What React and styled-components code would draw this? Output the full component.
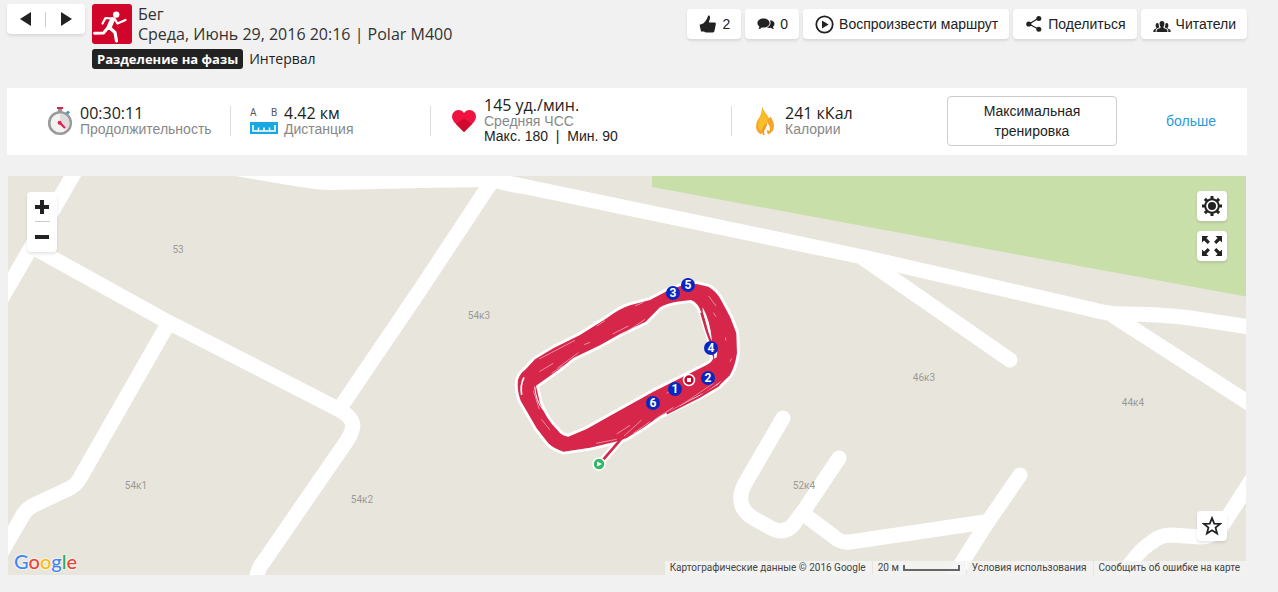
import styled, { createGlobalStyle } from "styled-components";

const GlobalStyle = createGlobalStyle`
    *{
        box-sizing: border-box;
    }
    body{
        margin:0;
        background-color: #f1f1f1;
        color:#222;
        font-family: "Liberation Sans", Arial, sans-serif;
        font-size:14px;
    }
    button{
        font-family: inherit;
        color:inherit;
        cursor: pointer;
    }
    h1, p, dl, dd{
        margin:0;
        font-weight: normal;
    }
    a{
        text-decoration: none;
    }
`;
const Page = styled.div`
    display: flex;
    flex-direction: column;
    min-height:100vh;
    padding:4px 31px 17px 7px;
`;
const Header = styled.header`
    display: flex;
    align-items: flex-start;
    height:84px;
`;
const Panel = styled.div`
    display: flex;
    align-items: center;
    background-color: white;
    border-radius: 4px;
    box-shadow: 0 2px 3px rgba(0,0,0,0.1);
`;
const Pager = styled(Panel)`
    height:30px;
    margin-right:7px;
`;
const PagerButton = styled.button`
    display: flex;
    align-items: center;
    justify-content: center;
    width:38px;
    height:30px;
    padding:0;
    border:none;
    background: none;
`;
const PagerLine = styled.span`
    width:2px;
    height:15px;
    border-left:1px solid #ccc;
`;
const SportIcon = styled.svg`
    width:40px;
    height:40px;
    border-radius: 3px;
    background-color: #d10429;
`;
const Session = styled.div`
    font-family: "Open Sans", "Noto Sans", sans-serif;
`;
const SessionTop = styled.div`
    display: flex;
    gap:6px;
`;
const Title = styled.h1`
    font-size:16px;
    line-height:20px;
    color:#333;
`;
const Tags = styled.div`
    display: flex;
    align-items: center;
    gap:6px;
    margin-top:5px;
    font-size:14px;
    line-height:20px;
`;
const PhaseTag = styled.span`
    padding:0 5px;
    border-radius: 3px;
    background-color: #222;
    color:white;
    font-size:13px;
    font-weight: bold;
`;
const Actions = styled.div`
    display: flex;
    gap:4px;
    margin-left:auto;
    margin-top:5px;
`;
const Action = styled(Panel).attrs({ as: "button", type: "button" })`
    height:30px;
    gap:5px;
    padding:0 11px 0 12px;
    border:none;
    font-size:14px;
    svg{
        display: block;
    }
`;
const Summary = styled.section`
    display: grid;
    grid-template-columns: 224fr 200fr 301fr 215fr 170fr 130fr;
    align-items: center;
    min-height:67px;
    margin-bottom:21px;
    padding-bottom:2px;
    background-color: white;
`;
const Stat = styled.div`
    display: flex;
    align-items: center;
    padding-left:${(props) => (props.$first ? "37px" : "17px")};
    &::after{
        content:"";
        width:${(props) => (props.$last ? "0" : "1px")};
        height:30px;
        margin-left:auto;
        background-color: #ddd;
    }
`;
const StatIcon = styled.span`
    display: flex;
    justify-content: center;
    width:32px;
    margin-right:4px;
`;
const StatText = styled.dl`
    display: flex;
    flex-direction: column-reverse;
    white-space: nowrap;
    dt{
        line-height:16px;
        color:#888;
    }
    dd{
        font-family: "Open Sans", "Noto Sans", sans-serif;
        font-size:16px;
        line-height:16px;
    }
`;
const Range = styled.p`
    line-height:15px;
    white-space: pre;
`;
const Benefit = styled.button`
    min-height:50px;
    padding:0 20px;
    border:1px solid #ccc;
    border-radius: 4px;
    background-color: white;
    font-size:14px;
    line-height:20px;
`;
const More = styled.a`
    justify-self: end;
    margin-right:31px;
    color:#2a9bd6;
`;
const Map = styled.main`
    position: relative;
    flex:1;
    min-height:300px;
    margin:0 1px;
    overflow: hidden;
    background-color: #e8e6dc;
`;
const MapCanvas = styled.svg`
    position: absolute;
    width:100%;
    height:100%;
    font-family: Roboto, sans-serif;
`;
const ZoomBox = styled(Panel)`
    position: absolute;
    top:16px;
    left:19px;
    flex-direction: column;
`;
const ZoomButton = styled(PagerButton)`
    width:30px;
`;
const ZoomLine = styled.span`
    width:15px;
    margin-top:-1px;
    border-top:1px solid #ccc;
`;
const MapTools = styled.div`
    position: absolute;
    top:15px;
    right:19px;
    bottom:34px;
    display: flex;
    flex-direction: column;
    gap:10px;
`;
const MapTool = styled(Panel).attrs({ as: "button", type: "button" })`
    justify-content: center;
    width:30px;
    height:30px;
    padding:0;
    border:none;
    &:last-child{
        margin-top:auto;
    }
`;
const Google = styled.a`
    position: absolute;
    left:6px;
    bottom:1px;
    font-family: Lato, sans-serif;
    font-size:20px;
    line-height:26px;
    font-weight: 500;
    color:#4285f4;
    text-shadow: 0 0 2px white, 0 0 2px white;
`;
const Letter = styled.span`
    color:${(props) => props.$color};
`;
const Credits = styled.footer`
    position: absolute;
    right:0;
    bottom:0;
    display: flex;
    gap:1px;
    font-family: Roboto, sans-serif;
    font-size:10px;
    line-height:14px;
    color:#444;
`;
const Credit = styled.span`
    display: flex;
    align-items: center;
    gap:4px;
    padding:0 6px 0 5px;
    background-color: rgba(243,243,243,0.85);
    a{
        color:inherit;
    }
`;
const ScaleBar = styled.span`
    width:57px;
    height:6px;
    border:2px solid #666;
    border-top:none;
`;

const roads = [
    "M76 170L-4 308",
    "M36 249L168 322L338 409Q356 419 352 430Q350 437 344 445L262 564Q258 569 256 580",
    "M168 324L80 478Q76 486 66 490L36 504Q27 508 23 515L-2 558",
    "M342 405L420 290L490 184",
    "M498 181L863 257L1090 309Q1108 314 1120 314Q1160 314 1190 318L1250 327",
    "M1112 315L1258 409",
    "M1120 580Q1136 552 1152 542Q1160 535 1172 535L1200 537Q1214 537 1222 526L1258 470",
];
const deadEnds = [
    "M863 258L1010 360",
    "M783 418L747 480Q738 494 742 506Q745 513 753 518L771 528Q784 535 793 525L805 509L839 458",
    "M805 515L833 536Q840 543 850 542L985 522",
    "M1020 475L985 526L949 583",
];
const houses = [
    { x: 178, y: 253, name: "53" },
    { x: 479, y: 319, name: "54к3" },
    { x: 136, y: 489, name: "54к1" },
    { x: 362, y: 503, name: "54к2" },
    { x: 924, y: 381, name: "46к3" },
    { x: 1133, y: 406, name: "44к4" },
    { x: 804, y: 489, name: "52к4" },
];
const laps = [
    { x: 675, y: 389, lap: 1 },
    { x: 708, y: 378, lap: 2 },
    { x: 673, y: 293, lap: 3 },
    { x: 711, y: 348, lap: 4 },
    { x: 688, y: 285, lap: 5 },
    { x: 653, y: 403, lap: 6 },
];
const track =
    "M590 42L625 50Q650 64 663 90L690 140Q700 165 709 190L711 250Q705 290 690 315L655 350L600 380L480 438L430 473L380 504L355 513L270 533L190 545Q160 535 145 520L110 475L62 392Q50 360 54 330Q60 310 75 300L105 268L160 235L240 195L320 145Q360 115 390 106L450 90L500 64L550 45Z" +
    "M573 90L530 95Q500 100 480 112L437 155L360 192L300 226L220 264L175 300L108 347L120 400Q140 450 172 480Q185 498 205 500L260 477L340 432L460 365L560 315L620 285Q636 277 640 264L632 240L632 215L620 180L605 130Q595 98 573 90Z";
const streaks =
    "M118 267L225 211M118 305L160 280M155 310L188 288M172 295L235 248M252 224L270 217M290 168L315 152M338 192L385 168M365 195L435 148M405 108L430 97M100 362L118 418M124 448L150 480M288 520L350 508M350 492L390 466M372 498L425 450M400 490L450 455M462 450L520 412M540 408L640 340M626 78L648 108M640 128L648 140M676 202L678 212M690 275L695 265M500 370L520 358";

function MyMap() {
    return (
        <MapCanvas viewBox="8 176 1238 399" preserveAspectRatio="xMidYMid slice" role="img" aria-label="Карта">
            <path d="M652 170V187L1090 268L1260 299V170Z" fill="#c9dfaa" />
            <g fill="none" stroke="white" strokeWidth="15" strokeLinejoin="round">
                <path d="M212 172L300 187Q320 190 330 190L420 188L490 187L520 194L500 172Z" fill="white" stroke="none" />
                {roads.map((d) => <path key={d} d={d} />)}
                {deadEnds.map((d) => <path key={d} d={d} strokeLinecap="round" />)}
            </g>
            <g fill="#999" fontSize="10" textAnchor="middle">
                {houses.map((h) => <text key={h.name} x={h.x} y={h.y}>{h.name}</text>)}
            </g>
            <g transform="translate(500 270) scale(0.3333)" fill="none" strokeLinejoin="round">
                <path d="M300 580L362 508" stroke="white" strokeWidth="22" />
                <path d={track} fillRule="evenodd" fill="#d6274b" stroke="white" strokeWidth="17" />
                <path d={track} fillRule="evenodd" fill="#d6274b" />
                <path d="M300 580L365 505" stroke="#d6274b" strokeWidth="8" />
                <path d="M608 112Q630 150 636 212L628 205Q622 170 608 125ZM642 250L652 245L650 262L643 266Z" fill="white" />
                <path d="M604 128L620 182L632 215" stroke="#d6274b" strokeWidth="7" />
                <path d="M484 436L590 385L640 350L685 318L664 345L600 374Z" fill="white" />
                <path d="M500 431L600 380L655 346L688 312" stroke="#d6274b" strokeWidth="6" />
                <path d="M104 350Q108 395 130 420" stroke="white" strokeWidth="3" />
                <path d={streaks} stroke="#f3bcc5" strokeWidth="2" />
                <path d="M65 375Q60 345 72 322" stroke="white" strokeWidth="5" />
            </g>
            <circle cx="599" cy="464" r="6" fill="#35b768" stroke="white" strokeWidth="1.5" />
            <path d="M597 461.5L602 464L597 466.5Z" fill="white" />
            <circle cx="689" cy="380" r="5.5" fill="#c5062f" stroke="white" strokeWidth="1.5" />
            <rect x="687" y="378" width="4" height="4" fill="white" />
            {laps.map((l) => (
                <g key={l.lap}>
                    <circle cx={l.x} cy={l.y} r="7" fill="#0726c4" />
                    <text x={l.x} y={l.y + 4} fill="white" fontSize="12" fontWeight="bold" textAnchor="middle">{l.lap}</text>
                </g>
            ))}
        </MapCanvas>
    );
}

function App() {
    return (
        <Page>
            <GlobalStyle />
            <Header>
                <Pager>
                    <PagerButton type="button" aria-label="Назад">
                        <svg width="12" height="14"><path d="M11 0V14L0 7Z" fill="#222" /></svg>
                    </PagerButton>
                    <PagerLine />
                    <PagerButton type="button" aria-label="Вперёд">
                        <svg width="12" height="14"><path d="M1 0V14L12 7Z" fill="#222" /></svg>
                    </PagerButton>
                </Pager>
                <Session>
                    <SessionTop>
                        <SportIcon viewBox="0 0 40 40">
                            <circle cx="24.2" cy="10.6" r="3.2" fill="white" />
                            <g fill="none" stroke="white" strokeLinecap="round" strokeLinejoin="round">
                                <path d="M20.5 15.5L17 23.5" strokeWidth="5" />
                                <path d="M20 14.5L13.5 14L10.5 19.5" strokeWidth="2.2" />
                                <path d="M22.5 14.5L25.5 19.5L33.5 16" strokeWidth="2.2" />
                                <path d="M16.5 23L11.5 29L2.5 29.2" strokeWidth="3" />
                                <path d="M18 24L23 28.5L24.5 37" strokeWidth="3.2" />
                            </g>
                        </SportIcon>
                        <Title>Бег<br />Среда, Июнь 29, 2016 20:16 | Polar M400</Title>
                    </SessionTop>
                    <Tags>
                        <PhaseTag>Разделение на фазы</PhaseTag>
                        <span>Интервал</span>
                    </Tags>
                </Session>
                <Actions>
                    <Action aria-label="Нравится: 2">
                        <svg width="18" height="18" fill="#222">
                            <path d="M9.3 0.5Q10.8 0 11 1.8Q11.2 4 10 6.6L10.2 7.4L15.8 7.6Q17.2 7.8 16.8 9.2L15.4 16.2Q15 17.6 13.5 17.6L7.5 17.6Q5.8 17.4 5 16.4L2 16.6L0.6 9.8L4.2 8.6Q6.8 6.4 8 3.4Z" />
                        </svg>
                        2
                    </Action>
                    <Action aria-label="Комментарии: 0">
                        <svg width="18" height="12" fill="#222">
                            <path d="M6.5 0.5C10 0.5 12.6 2.4 12.6 5S10 9.6 6.5 9.6L4.8 9.5Q3.4 11 1.4 11Q2.4 10 2.3 8.5Q0.4 7.2 0.4 5C0.4 2.4 3 0.5 6.5 0.5Z" />
                            <path d="M13.2 2Q17.6 3 17.5 6Q17.4 7.8 16 8.8Q16 10 17 11Q15.2 11 13.8 9.8Q12 10.2 10 9.6Q14.6 7.6 13.2 2Z" />
                        </svg>
                        0
                    </Action>
                    <Action>
                        <svg width="19" height="19">
                            <circle cx="9.5" cy="9.5" r="8.2" fill="none" stroke="#222" strokeWidth="1.8" />
                            <path d="M7 5.5V13.5L13.6 9.5Z" fill="#222" />
                        </svg>
                        Воспроизвести маршрут
                    </Action>
                    <Action>
                        <svg width="18" height="18" fill="#222">
                            <path d="M14 3L4 9L14 14.5" fill="none" stroke="#222" strokeWidth="1.3" />
                            <circle cx="3.8" cy="9" r="2.6" />
                            <circle cx="13.8" cy="3.4" r="2.5" />
                            <circle cx="13.8" cy="14.2" r="2.5" />
                        </svg>
                        Поделиться
                    </Action>
                    <Action>
                        <svg width="18" height="16" viewBox="0 -2 18 16" fill="#222">
                            <path d="M9 3C11 3 11.6 4.4 11.4 6Q11.2 8 10.4 8.8L10.6 10Q14.2 11 14.4 12.4V14H3.6V12.4Q3.8 11 7.4 10L7.6 8.8Q6.8 8 6.6 6C6.4 4.4 7 3 9 3Z" />
                            <path d="M4.4 5Q5.4 5 5.6 6Q5.6 8 6.400 9.200Q3.200 10.200 2.700 12V14H0.400V12.600Q0.600 11.400 3.200 10.600L3.400 9.600Q2.600 8.800 2.600 7.200Q2.600 5 4.400 5ZM13.600 5Q12.600 5 12.400 6Q12.400 8 11.600 9.200Q14.800 10.200 15.300 12V14H17.600V12.600Q17.400 11.400 14.800 10.600L14.600 9.600Q15.400 8.800 15.400 7.200Q15.400 5 13.600 5Z" />
                        </svg>
                        Читатели
                    </Action>
                </Actions>
            </Header>
            <Summary>
                <Stat $first>
                    <StatIcon>
                        <svg width="26" height="30">
                            <path d="M19.5 8L22 5.5" stroke="#3aa3c8" strokeWidth="3" />
                            <path d="M13 3V7" stroke="#999" strokeWidth="4" />
                            <rect x="10" y="1" width="6" height="2" fill="#e0214d" />
                            <circle cx="13" cy="17" r="10.8" fill="#f2f2f2" stroke="#999" strokeWidth="2.6" />
                            <path d="M13 17L13 7.5A9.5 9.5 0 0 1 19.7 23.7Z" fill="#ddd" />
                            <path d="M13 17L18 22" stroke="#e0214d" strokeWidth="2.2" />
                            <circle cx="12.6" cy="16.8" r="2" fill="#e0214d" />
                        </svg>
                    </StatIcon>
                    <StatText>
                        <dt>Продолжительность</dt>
                        <dd>00:30:11</dd>
                    </StatText>
                </Stat>
                <Stat>
                    <StatIcon>
                        <svg width="28" height="28">
                            <g fill="#555" fontFamily="Roboto" fontSize="10">
                                <text x="0" y="9">A</text>
                                <text x="21" y="9">B</text>
                            </g>
                            <rect y="15" width="28" height="12" fill="#19a8e0" />
                            <path d="M3 18V24H25V18M8.5 20.5V24M14 20.5V24M19.5 20.5V24" fill="none" stroke="white" strokeWidth="1.5" />
                        </svg>
                    </StatIcon>
                    <StatText>
                        <dt>Дистанция</dt>
                        <dd>4.42 км</dd>
                    </StatText>
                </Stat>
                <Stat>
                    <StatIcon>
                        <svg width="24" height="24" viewBox="0 0 24 24">
                            <path d="M12 23L2 13Q0 10.5 0 7.5Q0.5 1.5 6.5 1Q10 1 12 4Q14 1 17.5 1Q23.5 1.5 24 7.5Q24 10.5 22 13Z" fill="#f0123f" />
                            <path d="M12 23L4 15L12 9.5L20 15Z" fill="#cf0a2c" />
                        </svg>
                    </StatIcon>
                    <div>
                        <StatText>
                            <dt>Средняя ЧСС</dt>
                            <dd>145 уд./мин.</dd>
                        </StatText>
                        <Range>{"Макс. 180  |  Мин. 90"}</Range>
                    </div>
                </Stat>
                <Stat $last>
                    <StatIcon>
                        <svg width="20" height="28" viewBox="0 0 20 28">
                            <path d="M7 0Q8 3 12 8Q13 10 14 11.5L15.5 9.5Q19 15 19 19Q19 25 13 27.5L10 20L6 27.5Q1 25 1 19Q1 15 4 11Q7 7 7 0Z" fill="#f4a52a" />
                            <path d="M7 0Q8 3 12 8Q13.5 12 12 16L10 20L5 24Q2 19 4 13Q8 7 7 0Z" fill="#f8bd27" />
                            <path d="M12 15Q16 20 14.5 24L12.5 23L10.5 27.5H8L6.5 23Q8 19 12 15Z" fill="#fffaf0" />
                            <path d="M12 18L9 24L9.5 28H8L6.5 23Q8 19 12 15Z" fill="#f7941e" />
                        </svg>
                    </StatIcon>
                    <StatText>
                        <dt>Калории</dt>
                        <dd>241 кКал</dd>
                    </StatText>
                </Stat>
                <Benefit type="button">Максимальная тренировка</Benefit>
                <More href="#more">больше</More>
            </Summary>
            <Map>
                <MyMap />
                <ZoomBox>
                    <ZoomButton type="button" aria-label="Увеличить">
                        <svg width="14" height="14"><path d="M7 0V14M0 7H14" stroke="#222" strokeWidth="4" /></svg>
                    </ZoomButton>
                    <ZoomLine />
                    <ZoomButton type="button" aria-label="Уменьшить">
                        <svg width="14" height="14"><path d="M0 7H14" stroke="#222" strokeWidth="4" /></svg>
                    </ZoomButton>
                </ZoomBox>
                <MapTools>
                    <MapTool aria-label="Настройки">
                        <svg width="20" height="20" viewBox="-10 -10 20 20">
                            <circle r="6.8" fill="none" stroke="#222" strokeWidth="2" />
                            <circle r="4" fill="#222" />
                            <path d="M0 -7V-10M0 7V10M-7 0H-10M7 0H10M5 -5L7.1 -7.1M-5 5L-7.1 7.1M5 5L7.1 7.1M-5 -5L-7.1 -7.1" stroke="#222" strokeWidth="3" />
                        </svg>
                    </MapTool>
                    <MapTool aria-label="Во весь экран">
                        <svg width="20" height="20" viewBox="-10 -10 20 20">
                            {[0, 90, 180, 270].map((angle) => (
                                <g key={angle} transform={`rotate(${angle})`}>
                                    <path d="M-10 -10H-3.5L-10 -3.5Z" fill="#222" />
                                    <path d="M-8 -8L-3.2 -3.2" stroke="#222" strokeWidth="3.2" />
                                </g>
                            ))}
                        </svg>
                    </MapTool>
                    <MapTool aria-label="В избранное">
                        <svg width="20" height="20" viewBox="1 1 18 18">
                            <path d="M10 2.8L12 7.8L17.3 8.1L13.2 11.5L14.6 16.8L10 13.9L5.4 16.8L6.8 11.5L2.7 8.1L8 7.8Z" fill="none" stroke="#222" strokeWidth="1.6" />
                        </svg>
                    </MapTool>
                </MapTools>
                <Google href="#google" aria-label="Google">
                    G<Letter $color="#ea4335">o</Letter><Letter $color="#fbbc05">o</Letter>g<Letter $color="#34a853">l</Letter><Letter $color="#ea4335">e</Letter>
                </Google>
                <Credits>
                    <Credit>Картографические данные © 2016 Google</Credit>
                    <Credit>20 м <ScaleBar /></Credit>
                    <Credit><a href="#terms">Условия использования</a></Credit>
                    <Credit><a href="#report">Сообщить об ошибке на карте</a></Credit>
                </Credits>
            </Map>
        </Page>
    );
}
export default App;
